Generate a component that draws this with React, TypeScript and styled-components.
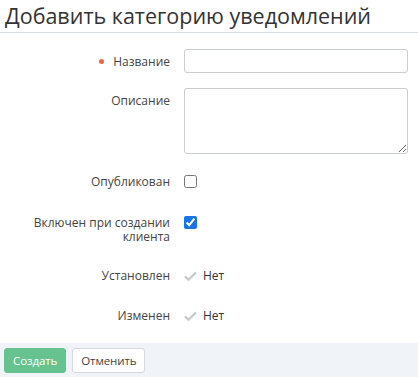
import React from "react";
import styled, { createGlobalStyle } from "styled-components";

const Global = createGlobalStyle`
  html, body { margin: 0; padding: 0; background: #fff; }
  body { font-family: "Open Sans", "Noto Sans", sans-serif; color: #333; }
  * { box-sizing: border-box; }
`;

const Page = styled.div`
  width: 418px;
  height: 377px;
  display: flex;
  flex-direction: column;
`;

const Header = styled.header`
  height: 37px;
  border-bottom: 1px solid #d8dee6;
  padding: 0 5px;
  display: flex;
  align-items: flex-start;
`;

const Title = styled.h1`
  margin: 0;
  font-size: 21.5px;
  font-weight: 400;
  line-height: 32px;
  color: #333;
`;

const Body = styled.div`
  flex: 1;
  padding: 16px 10px 0 0;
`;

const Row = styled.div<{ $h?: number }>`
  display: grid;
  grid-template-columns: 170px 1fr;
  column-gap: 14px;
  min-height: ${(p) => p.$h ?? 24}px;
  margin-bottom: 15px;
  align-items: start;
`;

const Label = styled.label<{ $required?: boolean }>`
  text-align: right;
  font-size: 12px;
  line-height: 14px;
  padding: 6px 0 4px;
  color: #444;
  &::before {
    content: "";
    display: ${(p) => (p.$required ? "inline-block" : "none")};
    width: 5px;
    height: 5px;
    border-radius: 50%;
    background: #f2643c;
    margin-right: 9px;
    vertical-align: 2px;
  }
`;

const TextInput = styled.input`
  height: 24px;
  width: 100%;
  border: 1px solid #c8cdd2;
  border-radius: 3px;
  padding: 0 6px;
  font-family: inherit;
  font-size: 12px;
  outline: none;
`;

const TextArea = styled.textarea`
  height: 66px;
  width: 100%;
  border: 1px solid #c8cdd2;
  border-radius: 3px;
  padding: 4px 6px;
  font-family: inherit;
  font-size: 12px;
  display: block;
  outline: none;
`;

const CheckCell = styled.div`
  height: 25px;
  display: flex;
  align-items: center;
`;

const Check = styled.input`
  margin: 0;
  width: 13px;
  height: 13px;
  accent-color: #1a73e8;
`;

const Value = styled.div`
  height: 25px;
  display: flex;
  align-items: center;
  gap: 6px;
  font-size: 12px;
  color: #333;
`;

const Footer = styled.footer`
  height: 36px;
  background: #f0f3f7;
  padding: 5px 4px;
  display: flex;
  gap: 6px;
  align-items: flex-start;
`;

const Button = styled.button<{ $primary?: boolean }>`
  height: 25px;
  padding: 0 8px;
  border-radius: 3px;
  font-family: "Open Sans", "Noto Sans", sans-serif;
  font-size: 11.5px;
  letter-spacing: -0.1px;
  cursor: pointer;
  border: 1px solid ${(p) => (p.$primary ? "#66c38f" : "#d5dae0")};
  background: ${(p) => (p.$primary ? "#66c38f" : "#fff")};
  color: ${(p) => (p.$primary ? "#fff" : "#444")};
`;

const Tick = () => (
  <svg width="13" height="10" viewBox="0 0 13 10">
    <path d="M1 5.5 L4.6 8.6 L12 1.5" fill="none" stroke="#c6cacf" strokeWidth="2.4" />
  </svg>
);

export default function App() {
  return (
    <>
      <Global />
      <Page>
        <Header>
          <Title>Добавить категорию уведомлений</Title>
        </Header>
        <Body>
          <Row>
            <Label $required>Название</Label>
            <TextInput type="text" />
          </Row>
          <Row>
            <Label>Описание</Label>
            <TextArea />
          </Row>
          <Row $h={26}>
            <Label>Опубликован</Label>
            <CheckCell>
              <Check type="checkbox" />
            </CheckCell>
          </Row>
          <Row>
            <Label>
              Включен при создании
              <br />
              клиента
            </Label>
            <CheckCell>
              <Check type="checkbox" defaultChecked />
            </CheckCell>
          </Row>
          <Row>
            <Label>Установлен</Label>
            <Value>
              <Tick />
              Нет
            </Value>
          </Row>
          <Row>
            <Label>Изменен</Label>
            <Value>
              <Tick />
              Нет
            </Value>
          </Row>
        </Body>
        <Footer>
          <Button $primary>Создать</Button>
          <Button>Отменить</Button>
        </Footer>
      </Page>
    </>
  );
}
